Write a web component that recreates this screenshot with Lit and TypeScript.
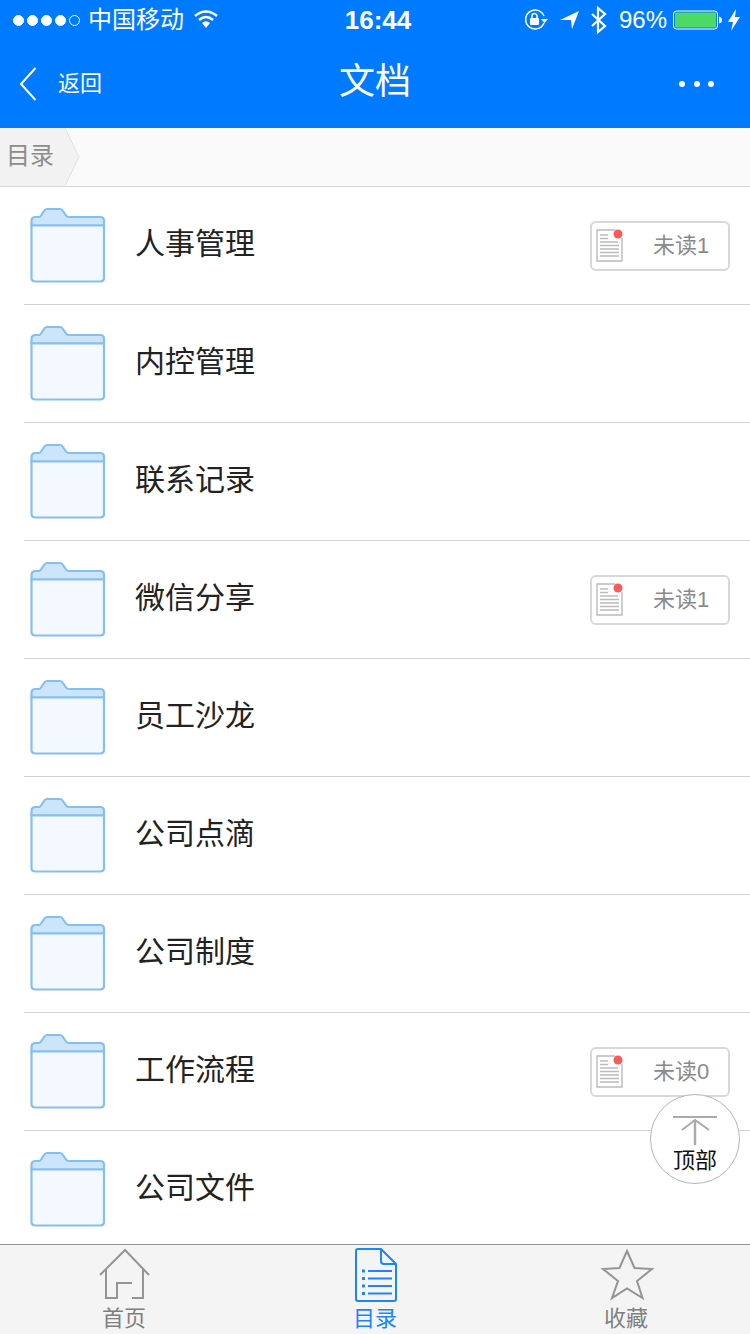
import { LitElement, css, html, nothing } from 'lit'
import { customElement } from 'lit/decorators.js'

const rows: { name: string; unread?: string }[] = [
  { name: '人事管理', unread: '未读1' },
  { name: '内控管理' },
  { name: '联系记录' },
  { name: '微信分享', unread: '未读1' },
  { name: '员工沙龙' },
  { name: '公司点滴' },
  { name: '公司制度' },
  { name: '工作流程', unread: '未读0' },
  { name: '公司文件' },
]

const folderIcon = html`<svg class="folder" width="76" height="77" viewBox="0 0 76 77">
  <path d="M1.500 14 Q1.500 10 5.500 10 H9 Q10 10 11 8.500 L14 4 Q15 2 17 2 H30 Q32 2 33 4 L36 8.500 Q37 10 39 10 H70 Q74 10 74 14 V18.500 H1.500 Z" fill="#cde5fb" stroke="#85bff0" stroke-width="2.200"/>
  <path d="M1.500 18.500 H74 V71 Q74 74.500 70 74.500 H5.500 Q1.500 74.500 1.500 71 Z" fill="#f4f9ff" stroke="#85bff0" stroke-width="2.200"/>
</svg>`

const docIcon = html`<svg width="28" height="36" viewBox="0 0 28 36">
  <path d="M19 2 H1 V33 H26 V10" fill="none" stroke="#bbb" stroke-width="1.400"/>
  <path d="M4 7 H12 M4 10.500 H12 M4 14 H22 M4 17.500 H23 M4 21 H23 M4 24.500 H23 M4 28 H23" stroke="#bbb" stroke-width="1.400"/>
  <circle cx="22" cy="6" r="4.500" fill="#fb5a5c"/>
</svg>`

@customElement('app-root')
export class AppRoot extends LitElement {
  static styles = css`
    :host {
      display: block;
      position: relative;
      height: 1334px;
      overflow: hidden;
      background: #fff;
      font-family: 'Liberation Sans', 'Noto Sans CJK SC', sans-serif;
    }
    .page {
      display: flex;
      flex-direction: column;
      height: 1334px;
    }
    .status {
      display: flex;
      align-items: center;
      height: 40px;
      flex: none;
      background: #007aff;
      color: #fff;
      position: relative;
    }
    .status-left {
      display: flex;
      align-items: center;
      margin-left: 13px;
    }
    .signal {
      display: flex;
      gap: 3px;
      margin-right: 8px;
    }
    .signal i {
      width: 11px;
      height: 11px;
      border-radius: 50%;
      background: #fff;
      border: 1px solid #fff;
      box-sizing: border-box;
    }
    .signal i.off {
      background: none;
    }
    .carrier {
      font-size: 24px;
      margin-right: 9px;
      line-height: 40px;
    }
    .time {
      position: absolute;
      left: 0;
      right: 0;
      text-align: center;
      font-size: 26px;
      font-weight: 700;
      line-height: 40px;
      padding-left: 6px;
    }
    .status-right {
      margin-left: auto;
      display: flex;
      align-items: center;
      margin-right: 9px;
    }
    .lock {
      margin-right: 12px;
    }
    .arrow {
      margin-right: 10px;
    }
    .bolt {
      margin-left: 5px;
    }
    .pct {
      font-size: 24px;
      margin: 0 6px 0 11px;
      line-height: 40px;
    }
    .nav {
      position: relative;
      display: flex;
      align-items: center;
      height: 88px;
      flex: none;
      background: #007aff;
      color: #fff;
    }
    .back {
      display: flex;
      align-items: center;
      margin-left: 19px;
      gap: 22px;
      font-size: 22px;
    }
    .back span {
      margin-bottom: 6px;
    }
    .title {
      position: absolute;
      left: 0;
      right: 0;
      top: 0;
      text-align: center;
      font-size: 36px;
      line-height: 84px;
    }
    .more {
      margin-left: auto;
      margin-right: 36px;
      display: flex;
      gap: 8.5px;
    }
    .more i {
      width: 6px;
      height: 6px;
      border-radius: 50%;
      background: #fff;
    }
    .crumb {
      flex: none;
      height: 58px;
      display: flex;
      background: #fafafa;
      border-bottom: 1px solid #d6d6d6;
    }
    .crumb-item {
      width: 65px;
      padding-left: 6px;
      box-sizing: border-box;
      background: #f2f2f2;
      color: #8c8c8c;
      font-size: 24px;
      line-height: 56px;
    }
    .crumb-tip {
      display: block;
      flex: none;
    }
    .list {
      flex: 1;
      min-height: 0;
      overflow: hidden;
    }
    .row {
      display: flex;
      align-items: center;
      height: 118px;
      box-sizing: border-box;
      margin-left: 24px;
      border-bottom: 1px solid #d2d2d2;
    }
    .folder {
      display: block;
      flex: none;
      margin-left: 6px;
    }
    .name {
      margin: 0 0 10px 30px;
      font-size: 30px;
      color: #222;
      flex: 1;
      text-indent: -1px;
    }
    .badge {
      display: flex;
      align-items: center;
      box-sizing: border-box;
      width: 140px;
      height: 50px;
      margin-right: 20px;
      padding-left: 4px;
      border: 2px solid #d8d8d8;
      border-radius: 6px;
      color: #8a8a8a;
      font-size: 22px;
    }
    .badge svg {
      flex: none;
      margin-right: 29px;
    }
    .badge span {
      margin-bottom: 6px;
    }
    .tabs {
      flex: none;
      height: 90px;
      display: grid;
      grid-template-columns: repeat(3, 250px);
      box-sizing: border-box;
      background: #f4f4f4;
      border-top: 1px solid #929292;
    }
    .tab {
      display: flex;
      flex-direction: column;
      align-items: center;
      color: #7f7f7f;
      font-size: 22px;
      line-height: 26px;
    }
    .tab svg {
      display: block;
      margin-top: 3px;
    }
    .tab span {
      margin-top: 2px;
    }
    .tab.home span {
      margin-right: 2px;
    }
    .tab.fav span {
      margin-left: 2px;
    }
    .tab.on {
      color: #1a85ff;
    }
    .top {
      position: absolute;
      left: 650px;
      top: 1094px;
      width: 90px;
      height: 90px;
      box-sizing: border-box;
      border: 1px solid #b5b5b5;
      border-radius: 50%;
      background: #fff;
      display: flex;
      flex-direction: column;
      align-items: center;
      color: #111;
      font-size: 22px;
      line-height: 26px;
    }
    .top svg {
      display: block;
      margin-top: 20px;
    }
  `

  render() {
    return html`
      <div class="page">
        <div class="status">
          <div class="status-left">
            <div class="signal">
              <i></i><i></i><i></i><i></i><i class="off"></i>
            </div>
            <span class="carrier">中国移动</span>
            <svg width="26" height="20" viewBox="0 0 26 20">
              <path d="M2 6 Q13 -3 24 6 M6 10 Q13 4 20 10" fill="none" stroke="#fff" stroke-width="2.600"/>
              <path d="M9 13 Q13 9.500 17 13 L13 18 Z" fill="#fff"/>
            </svg>
          </div>
          <div class="time">16:44</div>
          <div class="status-right">
            <svg class="lock" width="24" height="22" viewBox="0 0 24 22">
              <path d="M20 14 A9.500 9.500 0 1 1 20 7" fill="none" stroke="#fff" stroke-width="1.500"/>
              <path d="M17 10 H24 L20.500 14 Z" fill="#fff"/>
              <rect x="6" y="9" width="9" height="7" rx="1" fill="#fff"/>
              <path d="M8 9 V7 A2.500 2.500 0 0 1 13 7 V9" fill="none" stroke="#fff" stroke-width="1.500"/>
            </svg>
            <svg class="arrow" width="20" height="20" viewBox="0 0 20 20">
              <path d="M0 10 L19 1 L12 19 L11 10 Z" fill="#fff"/>
            </svg>
            <svg width="18" height="28" viewBox="0 0 18 28">
              <path d="M2 8 L15 20 L8 26 V2 L15 8 L2 20" fill="none" stroke="#fff" stroke-width="2.200"/>
            </svg>
            <span class="pct">96%</span>
            <svg width="50" height="20" viewBox="0 0 50 20">
              <rect x="0.500" y="1" width="44" height="18" rx="3" fill="none" stroke="#fff"/>
              <rect x="2" y="2.500" width="41" height="15" fill="#4cd964"/>
              <path d="M46 6.500 Q49 7 49 10 Q49 13 46 13.500 Z" fill="#fff"/>
            </svg>
            <svg class="bolt" width="13" height="22" viewBox="0 0 13 22">
              <path d="M8 0 L0 13 H5 L3 22 L12 8 H7 Z" fill="#fff"/>
            </svg>
          </div>
        </div>

        <div class="nav">
          <div class="title">文档</div>
          <div class="back">
            <svg width="17" height="34" viewBox="0 0 17 34">
              <path d="M16.500 1 L2 17 L16.500 33" fill="none" stroke="#fff" stroke-width="2"/>
            </svg>
            <span>返回</span>
          </div>
          <div class="more"><i></i><i></i><i></i></div>
        </div>

        <div class="crumb">
          <div class="crumb-item">目录</div>
          <svg class="crumb-tip" width="16" height="58" viewBox="0 0 16 58">
            <path d="M0 0 L14 29 L0 58 Z" fill="#f2f2f2"/>
            <path d="M0 0 L14 29 L0 58" fill="none" stroke="#e0e0e0" stroke-width="1"/>
          </svg>
        </div>

        <div class="list">
          ${rows.map(
            (r) => html`
              <div class="row">
                ${folderIcon}
                <div class="name">${r.name}</div>
                ${r.unread
                  ? html`<div class="badge">${docIcon}<span>${r.unread}</span></div>`
                  : nothing}
              </div>
            `,
          )}
        </div>

        <div class="tabs">
          <div class="tab home">
            <svg width="52" height="56" viewBox="0 0 52 56">
              <path d="M1 27 L26 2 L50 27 M7 21 V50 H18 V35 H33 M44 21 V50 H33" fill="none" stroke="#949494" stroke-width="2"/>
            </svg>
            <span>首页</span>
          </div>
          <div class="tab on">
            <svg width="46" height="56" viewBox="0 0 46 56">
              <path d="M4 3 Q4 1 6 1 H29 L44 16 V51 Q44 53 42 53 H6 Q4 53 4 51 Z M29 1 V13 Q29 16 32 16 H44" fill="none" stroke="#1a85ff" stroke-width="2"/>
              <path d="M16 23 H40 M16 30.500 H40 M16 38 H40 M16 45.500 H40" stroke="#1a85ff" stroke-width="2"/>
              <path d="M10 23 H13 M10 30.500 H13 M10 38 H13 M10 45.500 H13" stroke="#1a85ff" stroke-width="3"/>
            </svg>
            <span>目录</span>
          </div>
          <div class="tab fav">
            <svg width="60" height="56" viewBox="0 0 60 56">
              <path d="M32 3 L39.500 20 L57 21 L42 33 L47.500 50 L32 40.500 L17 50 L23 33 L8 21 L24.500 20 Z" fill="none" stroke="#949494" stroke-width="2"/>
            </svg>
            <span>收藏</span>
          </div>
        </div>
      </div>

      <div class="top">
        <svg width="46" height="33" viewBox="0 0 46 33">
          <path d="M1 2 H45" stroke="#aaa" stroke-width="2"/>
          <path d="M23 6 V30" fill="none" stroke="#aaa" stroke-width="2.500"/>
          <path d="M10 15 L23 5 L37 15" fill="none" stroke="#aaa" stroke-width="2"/>
        </svg>
        <span>顶部</span>
      </div>
    `
  }
}
